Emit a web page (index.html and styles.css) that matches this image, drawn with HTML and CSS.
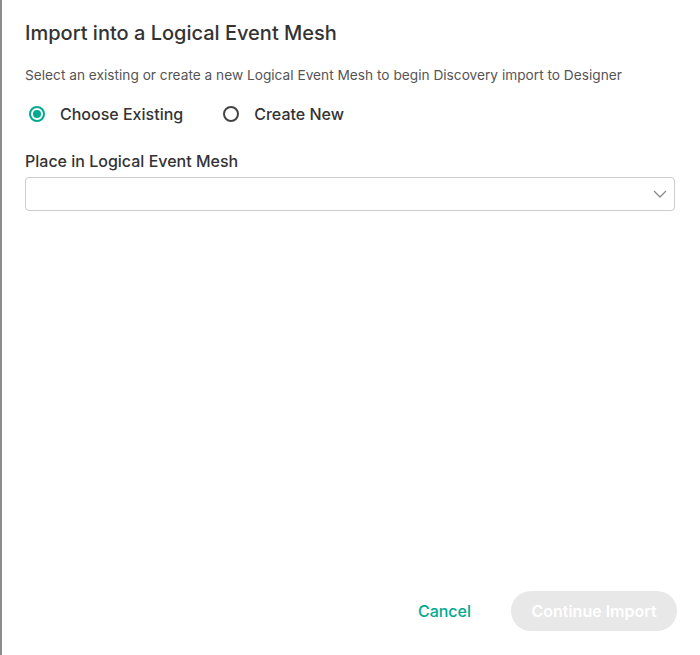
FILE: index.html
```html
<!DOCTYPE html>
<html>
<head>
<meta charset="utf-8">
<link rel="stylesheet" href="styles.css">
</head>
<body>
<div class="dialog">
  <h1 class="title">Import into a Logical Event Mesh</h1>
  <p class="subtitle">Select an existing or create a new Logical Event Mesh to begin Discovery import to Designer</p>
  <div class="radios">
    <label class="radio checked"><span class="dot"></span>Choose Existing</label>
    <label class="radio"><span class="dot"></span>Create New</label>
  </div>
  <div class="field-label">Place in Logical Event Mesh</div>
  <div class="select">
    <svg class="chev" width="14" height="8" viewBox="0 0 14 8"><path d="M1 1l6 6 6-6" fill="none" stroke="#8a8a8a" stroke-width="1.3"/></svg>
  </div>
  <div class="footer">
    <button class="btn-link">Cancel</button>
    <button class="btn-primary" disabled>Continue Import</button>
  </div>
</div>
</body>
</html>
```
FILE: styles.css
```css
html, body {
  margin: 0;
  padding: 0;
  background: #fff;
}
body {
  font-family: "Inter", "Liberation Sans", sans-serif;
  color: #333;
}
.dialog {
  box-sizing: border-box;
  height: 655px;
  width: 700px;
  border-left: 2px solid #8c8c8c;
  padding: 21px 25px 24px 23px;
  display: flex;
  flex-direction: column;
}
.title {
  margin: 0;
  font-size: 20px;
  line-height: 24px;
  font-weight: 500;
  color: #333;
}
.subtitle {
  margin: 21px 0 0;
  font-size: 13.7px;
  line-height: 18px;
  color: #555;
}
.radios {
  display: flex;
  gap: 40px;
  margin-top: 20px;
  padding-left: 4px;
}
.radio {
  display: flex;
  align-items: center;
  font-size: 16px;
  line-height: 20px;
  font-weight: 500;
  color: #333;
}
.dot {
  box-sizing: border-box;
  width: 16px;
  height: 16px;
  border-radius: 50%;
  border: 2px solid #444;
  margin-right: 15px;
  position: relative;
}
.radio.checked .dot {
  border-color: #00a98f;
}
.radio.checked .dot::after {
  content: "";
  position: absolute;
  left: 2px;
  top: 2px;
  width: 8px;
  height: 8px;
  border-radius: 50%;
  background: #00a98f;
}
.field-label {
  margin-top: 27px;
  font-size: 16px;
  line-height: 20px;
  font-weight: 500;
  color: #333;
}
.select {
  margin-top: 6px;
  height: 34px;
  box-sizing: border-box;
  border: 1px solid #ccc;
  border-radius: 4px;
  display: flex;
  align-items: center;
  justify-content: flex-end;
  padding-right: 7px;
}
.footer {
  margin-top: auto;
  margin-right: -2px;
  display: flex;
  justify-content: flex-end;
  align-items: center;
  gap: 20px;
}
.btn-link {
  background: none;
  border: none;
  font-family: inherit;
  font-size: 16px;
  font-weight: 500;
  color: #00a98f;
  padding: 0 20px;
  height: 40px;
}
.btn-primary {
  font-family: inherit;
  font-size: 16px;
  font-weight: 600;
  color: #fff;
  background: #e8e8e8;
  border: none;
  border-radius: 20px;
  height: 40px;
  width: 166px;
}
```
